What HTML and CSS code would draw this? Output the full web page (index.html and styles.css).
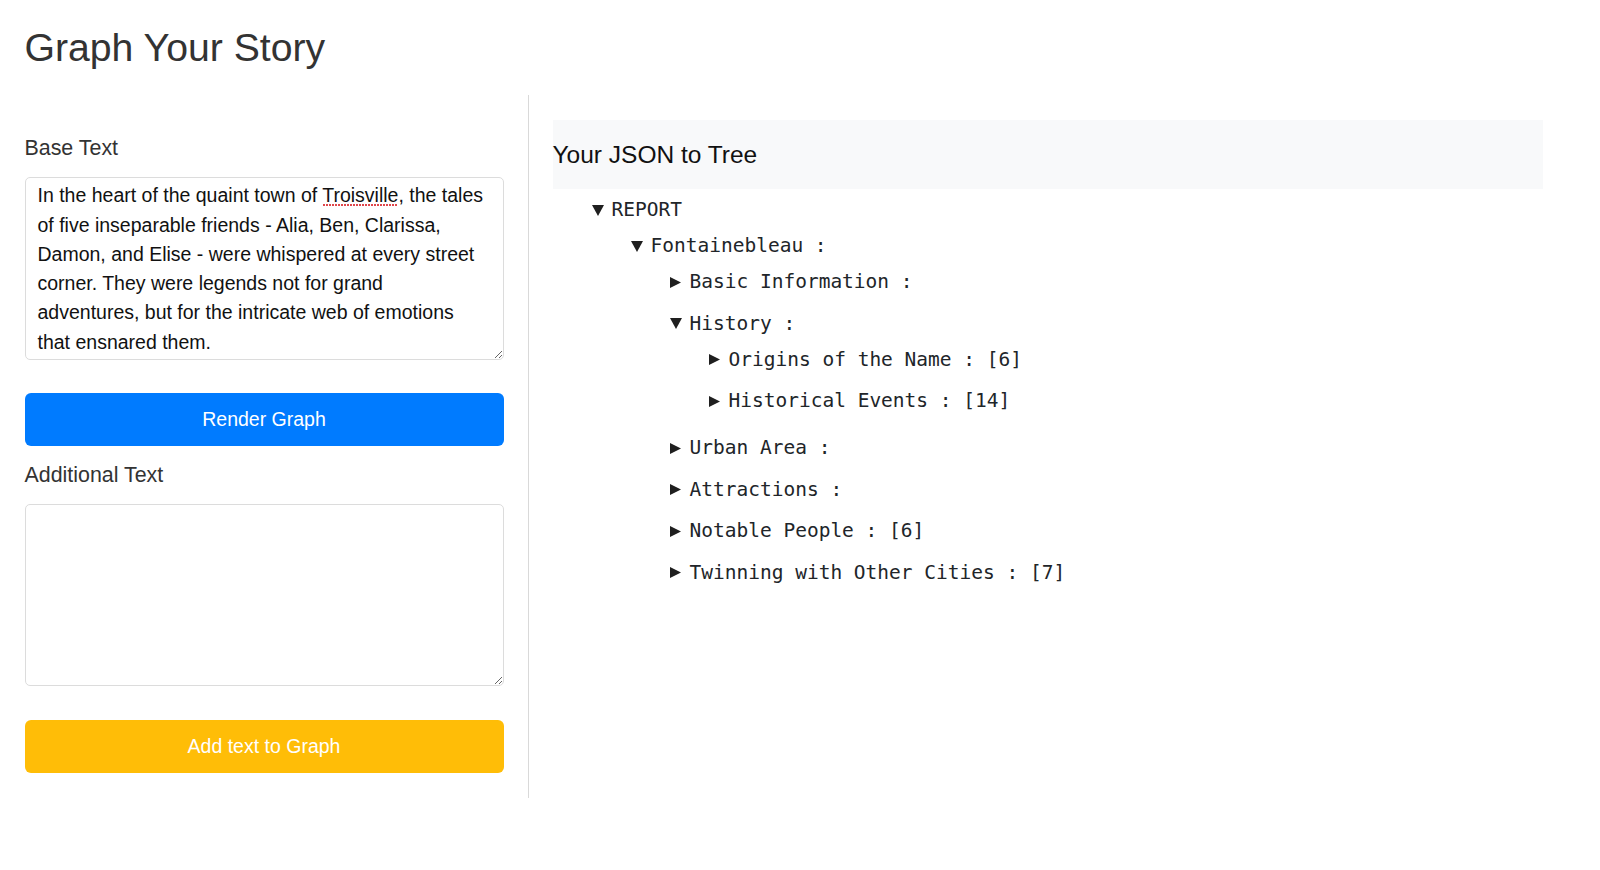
FILE: index.html
```html
<!DOCTYPE html>
<html lang="en">
<head>
<meta charset="utf-8">
<title>Graph Your Story</title>
<link rel="stylesheet" href="styles.css">
</head>
<body>
<div class="page">
  <h1 class="title">Graph Your Story</h1>
  <div class="main">
    <section class="left">
      <label class="label" for="base-text">Base Text</label>
      <div class="field">
        <textarea id="base-text" class="text-input" spellcheck="false">In the heart of the quaint town of Troisville, the tales of five inseparable friends - Alia, Ben, Clarissa, Damon, and Elise - were whispered at every street corner. They were legends not for grand adventures, but for the intricate web of emotions that ensnared them.</textarea>
        <span class="spell-mark"></span>
      </div>
      <button class="btn btn-primary" type="button">Render Graph</button>
      <label class="label label-additional" for="extra-text">Additional Text</label>
      <textarea id="extra-text" class="text-input"></textarea>
      <button class="btn btn-warning" type="button">Add text to Graph</button>
    </section>
    <section class="right">
      <h4 class="tree-header">Your JSON to Tree</h4>
      <ul class="tree">
        <li class="node">
          <div class="row"><span class="caret"><svg width="12" height="11" viewBox="0 0 12 11"><polygon points="0,0 12,0 6,11"/></svg></span><span>REPORT</span></div>
          <ul class="children">
            <li class="node">
              <div class="row"><span class="caret"><svg width="12" height="11" viewBox="0 0 12 11"><polygon points="0,0 12,0 6,11"/></svg></span><span>Fontainebleau :</span></div>
              <ul class="children">
                <li class="node">
                  <div class="row"><span class="caret"><svg width="11" height="11" viewBox="0 0 11 11"><polygon points="0,0 11,5.5 0,11"/></svg></span><span>Basic Information :</span></div>
                </li>
                <li class="node">
                  <div class="row"><span class="caret"><svg width="12" height="11" viewBox="0 0 12 11"><polygon points="0,0 12,0 6,11"/></svg></span><span>History :</span></div>
                  <ul class="children">
                    <li class="node">
                      <div class="row"><span class="caret"><svg width="11" height="11" viewBox="0 0 11 11"><polygon points="0,0 11,5.5 0,11"/></svg></span><span>Origins of the Name : [6]</span></div>
                    </li>
                    <li class="node">
                      <div class="row"><span class="caret"><svg width="11" height="11" viewBox="0 0 11 11"><polygon points="0,0 11,5.5 0,11"/></svg></span><span>Historical Events : [14]</span></div>
                    </li>
                  </ul>
                </li>
                <li class="node">
                  <div class="row"><span class="caret"><svg width="11" height="11" viewBox="0 0 11 11"><polygon points="0,0 11,5.5 0,11"/></svg></span><span>Urban Area :</span></div>
                </li>
                <li class="node">
                  <div class="row"><span class="caret"><svg width="11" height="11" viewBox="0 0 11 11"><polygon points="0,0 11,5.5 0,11"/></svg></span><span>Attractions :</span></div>
                </li>
                <li class="node">
                  <div class="row"><span class="caret"><svg width="11" height="11" viewBox="0 0 11 11"><polygon points="0,0 11,5.5 0,11"/></svg></span><span>Notable People : [6]</span></div>
                </li>
                <li class="node">
                  <div class="row"><span class="caret"><svg width="11" height="11" viewBox="0 0 11 11"><polygon points="0,0 11,5.5 0,11"/></svg></span><span>Twinning with Other Cities : [7]</span></div>
                </li>
              </ul>
            </li>
          </ul>
        </li>
      </ul>
    </section>
  </div>
</div>
</body>
</html>
```

FILE: styles.css
```css
* {
  box-sizing: border-box;
}

html, body {
  margin: 0;
  padding: 0;
  background: #ffffff;
}

body {
  font-family: "Liberation Sans", Arial, Helvetica, sans-serif;
  color: #212529;
}

.page {
  padding: 23.5px 24px 0 24.5px;
}

.title {
  margin: 0 0 23.5px 0;
  font-size: 39.2px;
  line-height: 48px;
  font-weight: 400;
  color: #333333;
}

.main {
  display: flex;
  align-items: flex-start;
}

.left {
  width: 504px;
  padding: 38.3px 25px 25px 0;
  border-right: 1px solid #d9d9d9;
  display: flex;
  flex-direction: column;
}

.label {
  display: block;
  font-size: 21.4px;
  line-height: 30.75px;
  color: #333333;
  margin-bottom: 13.3px;
}

.label-additional {
  margin-top: 13.8px;
}

.field {
  position: relative;
}

.spell-mark {
  position: absolute;
  left: 298px;
  top: 27px;
  width: 74px;
  height: 2px;
  background: radial-gradient(circle at 1px 1px, #e0474c 0.9px, transparent 1px);
  background-size: 3px 2px;
  pointer-events: none;
}

.text-input {
  display: block;
  width: 479px;
  height: 182.5px;
  padding: 3px 17px 3px 12px;
  border: 1px solid #dcdcdc;
  border-radius: 5px;
  font-family: "Liberation Sans", Arial, Helvetica, sans-serif;
  font-size: 19.5px;
  line-height: 29.25px;
  color: #111111;
  background: #ffffff;
  resize: vertical;
  outline: none;
  overflow: hidden;
}

.btn {
  display: block;
  width: 479px;
  height: 53px;
  margin-top: 33px;
  border: none;
  border-radius: 6px;
  font-family: "Liberation Sans", Arial, Helvetica, sans-serif;
  font-size: 19.5px;
  line-height: 29px;
  color: #ffffff;
  cursor: pointer;
  text-align: center;
}

.btn-primary {
  background: #007bff;
}

.btn-warning {
  background: #ffbd07;
  margin-top: 33.5px;
}

.right {
  width: 1014px;
  padding: 25px 0 0 24px;
}

.tree-header {
  margin: 0;
  padding: 20px 0;
  font-size: 24.5px;
  line-height: 29px;
  font-weight: 400;
  color: #111111;
  background: #f8f9fa;
}

.tree {
  list-style: none;
  margin: 2.5px 0 0 0;
  padding: 0 0 0 39px;
  font-family: "DejaVu Sans Mono", "Liberation Mono", monospace;
  font-size: 19.5px;
  color: #212529;
}

.children {
  list-style: none;
  margin: 0;
  padding: 0 0 0 39px;
}

.node {
  padding-bottom: 5.5px;
}

.row {
  display: flex;
  align-items: center;
  height: 36px;
  white-space: pre;
}

.caret {
  display: flex;
  align-items: center;
  width: 20px;
  flex: 0 0 20px;
  margin-top: 1px;
}

.caret svg {
  display: block;
  fill: #1f1f1f;
}
```
